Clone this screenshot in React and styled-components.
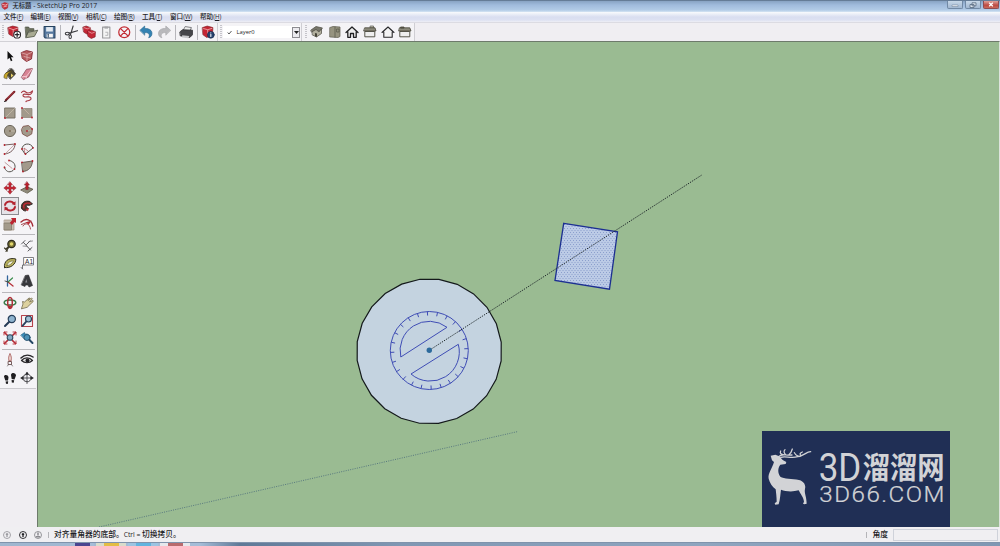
import React from "react";
import styled, { createGlobalStyle } from "styled-components";

const GlobalStyle = createGlobalStyle`
  * { box-sizing: border-box; }
  body { margin: 0; overflow: hidden; background: #f0eef2; }
`;

const ui = `"Open Sans", "Noto Sans CJK SC", sans-serif`;

const Window = styled.div`
  width: 1000px;
  height: 546px;
  display: flex;
  flex-direction: column;
  font-family: ${ui};
  color: #1d1d25;
  overflow: hidden;
`;

const TitleBar = styled.header`
  height: 12px;
  flex: none;
  display: flex;
  align-items: center;
  padding: 0 1px 1px 1px;
  background: linear-gradient(#52677f 0, #8ba6c6 1.5px, #a0bbdc 5px, #b2cbe6 10px, #d5e4f3 12px);
`;

const Title = styled.div`
  display: flex;
  align-items: center;
  margin-left: 3.5px;
  font-size: 6.8px;
  line-height: 11px;
  white-space: pre;
  flex: 1;
`;

const TitleCjk = styled.span`
  font-size: 6.3px;
  font-weight: 500;
`;

const WindowButtons = styled.div`
  display: flex;
  align-self: flex-start;
  gap: 2px;
  padding-top: 1px;
`;

const WindowButton = styled.div`
  width: 16px;
  height: 8px;
  display: grid;
  place-items: center;
  border: 1px solid ${(p) => (p.$close ? "#8f4c50" : "#7189a5")};
  border-top: 0;
  border-radius: 0 0 2px 2px;
  background: ${(p) => (p.$close ? "linear-gradient(#dfa39c, #bd4a42 60%, #c9695b)" : "linear-gradient(#c8d8e9, #a2b8d1)")};
`;

const MenuBar = styled.nav`
  height: 10px;
  flex: none;
  display: flex;
  padding-left: 3.5px;
  background: linear-gradient(#f8fafd 0, #eceff8 2px, #d9def0 5px, #dde1f2 8px, #eeeef5 10px);
`;

const MenuItem = styled.div`
  width: ${(p) => p.$w}px;
  font-size: 6.6px;
  font-weight: 500;
  line-height: 9px;
  white-space: nowrap;
`;

const Mnemonic = styled.span`
  font-size: 6.2px;
  letter-spacing: -0.1px;
  u { text-underline-offset: 0.5px; text-decoration-thickness: 0.6px; }
`;

const ToolStrip = styled.div`
  height: 19px;
  flex: none;
  display: flex;
  align-items: center;
  background: #f0eef2;
  border-top: 1px solid #dcdbe2;
`;

const StripGroup = styled.div`
  display: flex;
  align-items: center;
  height: 18px;
  padding-left: ${(p) => p.$pad ?? 1}px;
  padding-right: ${(p) => p.$end ?? 0}px;
  border-right: 1px solid #cfced3;
  background: #f4f3f6;
`;

const StripButton = styled.div`
  width: 17.7px;
  height: 18px;
  display: grid;
  place-items: center;
`;

const Divider = styled.div`
  width: 1px;
  height: 15px;
  margin: 0 1.7px;
  background: #b7b6bb;
`;

const Grip = styled.div`
  width: 2px;
  height: 14px;
  margin: 0 1px;
  background: repeating-linear-gradient(#c5c4ca 0 1px, #f4f3f6 1px 2px);
`;

const LayerSelect = styled.div`
  width: 77px;
  height: 12px;
  display: flex;
  align-items: center;
  padding-left: 4px;
  background: #fff;
  font-size: 5.8px;
`;

const LayerName = styled.span`
  flex: 1;
  padding-left: 4.5px;
`;

const SelectArrow = styled.div`
  width: 8px;
  height: 11px;
  border: 1px solid #8d8c91;
  background: #ecebef;
  display: grid;
  place-items: center;
`;

const Workspace = styled.main`
  flex: 1;
  min-height: 0;
  display: flex;
`;

const ToolPanel = styled.aside`
  width: 37px;
  flex: none;
  background: #f0eef2;
`;

const PanelInner = styled.div`
  width: 36px;
  padding: 5px 0 1px 0.5px;
  background: #f5f4f7;
  border-top: 1px solid #d2d1d6;
  border-bottom: 1px solid #cbcace;
`;

const ToolGroup = styled.div`
  display: grid;
  grid-template-columns: 18.3px 17.2px;
  grid-auto-rows: 17.7px;
  & + & {
    margin-top: 4.3px;
    position: relative;
  }
  & + &::before {
    content: "";
    position: absolute;
    top: -2.4px;
    left: 1px;
    width: 33px;
    height: 1px;
    background: #b9b8bc;
  }
`;

const ToolButton = styled.div`
  display: grid;
  place-items: center;
  border: 1px solid ${(p) => (p.$active ? "#8c8b90" : "transparent")};
  background: ${(p) => (p.$active ? "#e5e3e8" : "transparent")};
`;

const Canvas = styled.section`
  flex: 1;
  position: relative;
  background: #9abb92;
  border-left: 1px solid #6d7a6b;
  border-top: 1px solid #6d7a6b;
  border-right: 1px solid #dde3dd;
  overflow: hidden;
`;

const Scene = styled.svg`
  display: block;
`;

const Watermark = styled.div`
  position: absolute;
  right: 49px;
  bottom: 0;
  width: 188px;
  height: 96px;
  background: #202f55;
`;

const StatusBar = styled.footer`
  height: 15px;
  flex: none;
  display: flex;
  align-items: center;
  padding: 0 2px 0 2px;
  background: #f0eff2;
`;

const StatusIcons = styled.div`
  display: flex;
  gap: 5.5px;
`;

const StatusTick = styled.div`
  width: 1px;
  height: 6px;
  background: #b4b4b8;
  margin: 0 5px;
`;

const StatusText = styled.div`
  flex: 1;
  font-size: 7.75px;
  font-weight: 500;
  line-height: 15px;
  white-space: nowrap;
`;

const StatusLatin = styled.span`
  font-size: 6.8px;
  letter-spacing: -0.05px;
`;

const MeasureLabel = styled.div`
  font-size: 7.8px;
  font-weight: 500;
  line-height: 15px;
`;

const MeasureBox = styled.div`
  width: 105px;
  height: 12px;
  margin-left: 5px;
  border: 1px solid #cfd2da;
`;

const TaskBar = styled.div`
  height: 4px;
  flex: none;
  display: flex;
  padding-left: 70px;
  gap: 2px;
  border-top: 1px solid #7f93ac;
  background: linear-gradient(90deg, #9fb6cf, #a5bdd8 20%, #5f7997 24%, #8097b3 40%, #8fa5bf 70%, #7f97b3);
`;

const Task = styled.div`
  width: ${(p) => p.$w}px;
  display: flex;
  justify-content: center;
  background: ${(p) => p.$bg};
  &::after {
    content: "";
    width: 15px;
    height: 3px;
    background: ${(p) => p.$mark};
  }
`;

const Icon = ({ children, size = 14 }) => (
  <svg width={size} height={size} viewBox="0 0 14 14" fill="none" strokeLinecap="round" strokeLinejoin="round">
    {children}
  </svg>
);

const RED = "#b5202c";
const DARK = "#29262a";
const TAN = "#a29a8b";
const Dots = ({ at }) => at.map(([x, y]) => <circle key={`${x}-${y}`} cx={x} cy={y} r="0.9" fill={RED} />);

const icons = {
  create: (
    <>
      <path d="M1 2.500 5.500 1l5 1.200v6.800L5.500 11 2 9Z" fill="#c42533" stroke="#7d1b22" strokeWidth=".6" />
      <path d="m2 3 4 1.500L10.300 3M6 4.500V10" stroke="#ecb1b3" strokeWidth=".8" />
      <circle cx="9.800" cy="9.300" r="3.300" fill="#fff" stroke={DARK} strokeWidth="1" />
      <path d="M9.800 7.500v3.600M8 9.300h3.600" stroke={DARK} strokeWidth="1.200" />
    </>
  ),
  open: (
    <>
      <path d="M1.500 2h3l1 1.500h4v2.500h-5L2 11.500Z" fill="#6f7460" stroke="#454a3c" strokeWidth=".7" />
      <path d="M4.500 7 13.300 5 10 11 2 12.300Z" fill="#a9ab93" stroke="#55594a" strokeWidth=".8" />
    </>
  ),
  save: (
    <>
      <path d="M2 1.500h10.500v11H3l-1-1.200Z" fill="#55779e" stroke="#27435f" strokeWidth="1" />
      <path d="M4 2h6.500v4.300H4Z" fill="#e3eaf1" />
      <path d="M4.500 8.500h6v3.500h-6Z" fill="#f5f5f5" />
      <path d="M6 9v2.500" stroke="#27435f" />
    </>
  ),
  cut: (
    <>
      <path d="M8.800 1 6.300 9.300M13 5.500 5 7.800" stroke="#3b3b3e" strokeWidth="1.100" />
      <ellipse cx="3.200" cy="8.300" rx="2" ry="1.300" stroke="#3b3b3e" />
      <ellipse cx="6" cy="11.300" rx="1.200" ry="1.700" stroke="#3b3b3e" />
    </>
  ),
  copy: (
    <>
      <path d="m1 2 3-1 4 1.500v5L5 9 1.800 7Z" fill="#c42836" stroke="#7d1b22" strokeWidth=".6" />
      <path d="m5.500 6 3.500-1 4 1.500-.3 5L9 13l-3.200-2Z" fill="#c42836" stroke="#7d1b22" strokeWidth=".6" />
      <path d="m2 2.500 3 1.200 2.500-1M6.500 6.500 9.500 8 12 7" stroke="#e9a1a5" strokeWidth=".8" />
    </>
  ),
  paste: (
    <>
      <path d="M3.500 2h7v10.500h-7Z" fill="#f4f4f4" stroke="#9b9b9e" strokeWidth="1.100" />
      <path d="M5.300 1.500h3.400v2H5.300Z" fill="#a5a5a8" />
      <path d="M6.500 7h2v3h-2" stroke="#aaaaad" strokeWidth=".8" />
    </>
  ),
  erase: (
    <>
      <circle cx="7" cy="7" r="5.300" stroke="#c32d34" strokeWidth="1.200" />
      <path d="m3.500 3.500 7 7m0-7-7 7" stroke="#c32d34" strokeWidth="1.300" />
    </>
  ),
  undo: <path d="M1 5 5.500 1v2.500C10 3 12.800 5.500 12.500 8.500c0 2-1.500 3.500-3.200 3.800C11 9.500 9.500 7 5.500 7.300V9.500Z" fill="#3483b3" stroke="#24658d" strokeWidth=".6" />,
  redo: <path d="M13 5 8.500 1v2.500C4 3 1.200 5.500 1.500 8.500c0 2 1.500 3.500 3.200 3.800C3 9.500 4.500 7 8.500 7.300V9.500Z" fill="#b9b9bc" stroke="#a3a3a6" strokeWidth=".6" />,
  print: (
    <>
      <path d="M4 5 6 1.500l6 1L10.500 6Z" fill="#eee" stroke="#58585c" strokeWidth=".7" />
      <path d="M1 6.500 3.500 4.500 13 5v4.500L10.500 12 1.500 10.500Z" fill="#46464a" stroke="#252528" strokeWidth=".7" />
      <path d="M3 10 10 10.500 9 12.800 3 12Z" fill="#c9c9cc" />
    </>
  ),
  info: (
    <>
      <path d="M1.500 2.500 6 1l5.500 1.500L11 10l-5.500 2L2 9.500Z" fill="#c42533" stroke="#7d1b22" strokeWidth=".6" />
      <path d="m2.500 3.500 4 1 4-1.200M6.500 5v3" stroke="#ecb1b3" strokeWidth=".8" />
      <circle cx="9.500" cy="9.500" r="3.300" fill="#26436f" stroke="#172c4c" strokeWidth=".6" />
      <path d="M9.500 9v2.200M9.500 7.500v.1" stroke="#fff" />
    </>
  ),
  iso: (
    <>
      <path d="m1 5 5-3.500 6.500 1.500L9 6.500l-3-2L1.800 7Z" fill="#77766a" stroke="#4a493f" strokeWidth=".7" />
      <path d="m2.500 6.500 3.500-2L9 7l2.500-3v4.500L6.500 12 2.500 10Z" fill="#b1af9e" stroke="#4a493f" strokeWidth=".7" />
      <path d="M5 8v3.200L7 12V8.500Z" fill="#454338" />
    </>
  ),
  top: (
    <>
      <path d="M2 2.500 5 1.500l7 .5v9.500l-2 1-8-.5Z" fill="#96937f" stroke="#5c5a4c" strokeWidth=".7" />
      <path d="M7 2v10.300M9 4h2v3H9Z" stroke="#5c5a4c" strokeWidth=".8" />
    </>
  ),
  front: <path d="M1 7.500 7 2l6 5.500M2.800 7v5.300h2.700V8.500h3v3.800h2.700V7" stroke="#202022" strokeWidth="1.300" fill="#eee" />,
  right: (
    <>
      <path d="M7.500 1h3v2h-3Z" fill="#c7c5b4" stroke="#55544a" strokeWidth=".7" />
      <path d="M2 2.800h10L13 6H1Z" fill="#8b897a" stroke="#464539" strokeWidth=".8" />
      <path d="M2.200 6.500h9.600v5.300H2.200Z" fill="#eee" stroke="#464539" strokeWidth=".9" />
    </>
  ),
  back: <path d="M1 7.500 7 2l6 5.500M2.800 7v5.300h8.400V7" stroke="#28282a" strokeWidth="1.100" fill="#f4f4f4" />,
  left: (
    <>
      <path d="M3 2h3v1H3ZM1.800 2.800h10L13 6H1Z" fill="#8b897a" stroke="#464539" strokeWidth=".8" />
      <path d="M2.200 6.500h9.600v5.300H2.200Z" fill="#eee" stroke="#464539" strokeWidth=".9" />
    </>
  ),
  select: <path d="M4.500 2v8.500l2-1.800 1.400 3.500 1.500-.6L8 8.300h2.600Z" fill="#111" />,
  component: (
    <>
      <path d="m1.500 3.500 5-2 6 1.500-1 7-5 2.500-4-3Z" fill="#b65a5d" stroke="#7d2028" strokeWidth=".8" />
      <path d="m2 4 5 1.500L12 3.300M7 5.500v6.300M4 7.500 10 9" stroke="#ddadad" strokeWidth=".8" />
    </>
  ),
  appMark: (
    <>
      <path d="m1.500 3 5-2 6 1.500-1 8-5 2.500-4-3Z" fill="#c8323c" stroke="#a3202b" strokeWidth=".8" />
      <path d="m2.500 4 5 1.500 4-2M5 8.500l5-1.500" stroke="#f3d3d5" strokeWidth="1.300" />
    </>
  ),
  paint: (
    <>
      <path d="M3 6 8.500 2l4 5-5 5Z" fill="#4c4631" stroke="#24211a" strokeWidth=".8" />
      <path d="M1 10.500C.800 7 3 4.500 8.500 4.800 5 6 4.500 7 4 11.500Z" fill="#c9a92c" stroke="#4b4019" strokeWidth=".6" />
      <path d="m8 6.500 2.500 2L8 10.500" fill="#e7d16b" />
      <path d="M5 4c0-3 5-3.500 6 0" stroke="#54534d" />
    </>
  ),
  eraser: (
    <>
      <path d="M1.500 10 6.500 2.300l6-.8-3.800 8.500-5 2.500Z" fill="#d88495" stroke="#8c4a57" strokeWidth=".8" />
      <path d="m2 9.800 4.500-.5L12 2M6.500 9.300 6 11.500" stroke="#f4cfd5" strokeWidth=".9" />
    </>
  ),
  line: (
    <>
      <path d="M2.800 11.300 11.300 2.800" stroke="#7a1e24" strokeWidth="2.200" />
      <path d="m4.500 9 6-6" stroke="#c05058" strokeWidth=".8" />
      <path d="m1.500 12.500 2-.7" stroke="#222" />
    </>
  ),
  freehand: <path d="M1.500 3.500C3 1.500 4.500 2 6 3.200S9.500 4.500 12.500 2c-.5 3.500-3 4-5 3.500S3 4.500 3 6.500s3 1.500 5.500 1.300 3.500 2.200 1.500 3.200-3 .5-4 1.500" stroke="#a83c45" strokeWidth="1.200" />,
  rect: (
    <>
      <path d="M2 2h10v10H2Z" fill={TAN} stroke="#716a5c" strokeWidth=".9" />
      <path d="m2.500 11.500 9-9" stroke="#c6bda9" strokeWidth=".8" />
      <Dots at={[[2, 12]]} />
    </>
  ),
  rotRect: (
    <>
      <path d="M2 2.500h10v9H2Z" fill={TAN} stroke="#8a8272" strokeWidth=".7" />
      <path d="m4 3 5 5" stroke="#c9b9a8" strokeWidth=".8" />
      <Dots at={[[2, 2], [2, 12], [12, 11.500]]} />
    </>
  ),
  circle: (
    <>
      <circle cx="7" cy="7" r="5.600" fill={TAN} stroke="#625c50" strokeWidth=".9" />
      <path d="M7 7h5" stroke="#c9c0ae" strokeWidth=".8" />
      <circle cx="7" cy="7" r=".9" fill="#776450" />
    </>
  ),
  polygon: (
    <>
      <path d="M3.500 2.300 8.500 1.500l4 3.500-.8 5-4.500 2.500-4.700-2.500L1.500 6Z" fill={TAN} stroke="#81584f" strokeWidth=".9" />
      <path d="m7 7 5-1.500" stroke="#cbbdae" strokeWidth=".7" />
      <Dots at={[[7, 7], [12, 5]]} />
    </>
  ),
  arc: (
    <>
      <path d="M1.500 3 12 2c0 5-4 9.500-10.500 10" stroke="#6b4d4c" strokeWidth=".9" />
      <path d="m2.500 11.500 9-9" stroke="#b48587" strokeWidth=".7" />
      <Dots at={[[1.500, 3], [12, 2], [1.500, 12]]} />
    </>
  ),
  arc2: (
    <>
      <path d="M2 7c0-6 9-7 11-1L5.500 12Z" stroke="#55534e" strokeWidth="1" />
      <path d="M5 12 4 6l4 3" stroke="#b15b60" strokeWidth=".7" />
      <Dots at={[[2, 7], [13, 5.800], [5.500, 12]]} />
    </>
  ),
  arc3: (
    <>
      <path d="M6.500 1.500C12 2.500 14 8.500 10 11.500S2 12 1.500 8" stroke="#55534e" strokeWidth="1" />
      <path d="m2 3.500 7 5.800" stroke="#b48587" strokeWidth=".8" />
      <Dots at={[[1.500, 8.500], [6, 1.500], [11.500, 10]]} />
    </>
  ),
  pie: (
    <>
      <path d="M2 3.500 12.500 2C12 8 9 12 3 12.500Z" fill={TAN} stroke="#5e574d" strokeWidth=".9" />
      <Dots at={[[2, 3.300], [12.500, 2], [3, 12.500]]} />
    </>
  ),
  move: <path d="m7 .8 2.500 3H8v2.200h2.200V4.500l3 2.500-3 2.500V8H8v2.200h1.500L7 13.200l-2.500-3H6V8H3.800v1.500L.8 7l3-2.500V6H6V3.800H4.500Z" fill="#c52635" stroke="#852029" strokeWidth=".4" />,
  pushpull: (
    <>
      <path d="m1 8.800 6-3 6 2.500L7.500 12Z" fill="#8e8979" stroke="#57513f" strokeWidth=".8" />
      <path d="M7 .7 9.500 4H8.200v4.500H5.800V4H4.500Z" fill="#b9202e" stroke="#76151e" strokeWidth=".4" />
    </>
  ),
  rotate: (
    <>
      <path d="M2 6c.7-3.700 6-4.600 8.500-2" stroke="#b32430" strokeWidth="1.900" />
      <path d="m12.600 2.200-.2 4.200L8.600 5Z" fill="#b32430" />
      <path d="M12 8c-.7 3.700-6 4.600-8.500 2" stroke="#b32430" strokeWidth="1.900" />
      <path d="M1.400 11.800 1.600 7.600 5.400 9Z" fill="#b32430" />
    </>
  ),
  follow: (
    <>
      <path d="M1.500 9C.5 4 5 1 10 2.500l2.500 2.500L9 6.500C6 5.500 5.500 8 8.500 9.500L5.500 12C4 12 2 11 1.500 9Z" fill="#54352f" stroke="#2b211f" strokeWidth=".8" />
      <path d="M4 9C2.500 5 6 3.500 10 4.300" stroke="#c32a36" strokeWidth="1.300" />
      <path d="m5.500 10 3.500-.5-1.200 2.800Z" fill="#c32a36" />
    </>
  ),
  scale: (
    <>
      <path d="M1.500 3h9.500v10H1.500Z" fill="#c9bfb2" stroke="#a0907f" strokeWidth=".7" />
      <path d="M1.500 6H8.500v7H1.500Z" fill="#a49b8b" stroke="#7c7262" strokeWidth=".7" />
      <path d="M8 1h5v5l-1.500-1L9 8 6.800 5.700 9.300 3Z" fill="#bc2430" />
    </>
  ),
  offset: (
    <>
      <path d="M1 5c5-4.500 10.500-2.500 11.800 4" stroke="#a62b36" strokeWidth="1.400" />
      <path d="M3 9c2-4 7-2.500 7.500 3M1.500 7.500 8 5l3-1" stroke="#a84e55" strokeWidth="1" />
      <path d="m6 5 4.500 0-2 3Z" fill="#bf2633" />
    </>
  ),
  tape: (
    <>
      <circle cx="8.500" cy="5" r="3.700" fill="#777035" stroke="#2d2b1e" strokeWidth="1.200" />
      <circle cx="8.500" cy="5" r="1.700" fill="#e2d76c" />
      <path d="M5.500 7.500 3 10M1.500 9l3 3M6 8l-3 4.500" stroke="#3e3a28" strokeWidth="1.100" />
    </>
  ),
  dimension: (
    <>
      <path d="M3.500 3.500 10.500 11M1.500 5l3.500-3.500M8 12l4-3.500M6.500 5.500 10 2" stroke="#4a4a4c" strokeWidth=".9" />
      <path d="m3 7 4 .3M9 2.500l3.500-.5" stroke="#737377" strokeWidth=".8" />
    </>
  ),
  protractor: (
    <>
      <path d="M1.500 11.500C.5 5.500 5.500 1 12.800 3c.2 5-4.800 9.500-11.300 8.500Z" fill="#b8b05a" stroke="#353323" strokeWidth="1" />
      <path d="M4 9.700C4 7 7 4.800 10.500 4.800 9 7.800 7 9.300 4 9.700Z" fill="#f4f3dc" stroke="#706b3b" strokeWidth=".7" />
    </>
  ),
  text: (
    <>
      <path d="M4 1.500h9.500v7.500H4Z" fill="#fff" stroke="#626266" strokeWidth=".8" />
      <text x="5.100" y="7.600" fontSize="6.500" fontFamily="Liberation Sans" fill="#29292e">A1</text>
      <path d="M4 9H2.500v3.500M1.200 11.500l1.300 1.500" stroke="#565659" strokeWidth=".8" />
    </>
  ),
  axes: (
    <>
      <path d="M4.500 2v10" stroke="#32649b" strokeWidth="1.300" />
      <path d="m5 8 5 4" stroke="#b52c35" strokeWidth="1.300" />
      <path d="m5 8 4.500-4" stroke="#3b8d4d" strokeWidth="1.200" />
      <path d="m2 7 3 1" stroke="#444" strokeWidth=".9" />
    </>
  ),
  text3d: (
    <>
      <path d="M5.500 1.500 8.500 1l4 10.500-3.500 1.500-1-2H5.500L5 12.500 1.500 11Z" fill="#39393d" stroke="#252529" strokeWidth=".6" />
      <path d="m6.300 5 1 3.500H5.200Z" fill="#8d8d92" />
    </>
  ),
  orbit: (
    <>
      <ellipse cx="7" cy="6.500" rx="5.800" ry="2.600" stroke="#397b48" strokeWidth="1.500" />
      <ellipse cx="7" cy="7" rx="2.300" ry="5.500" stroke="#ae3038" strokeWidth="1.500" />
      <path d="m5 9.500 4.500.5-3 3Z" fill="#b52832" />
    </>
  ),
  pan: <path d="M1.500 12.500 3 8l-.5-2.500 2 .5L9 2l1 .3-2 2.200L11.500 2l.8.8L9.500 6 13 4.500l.2 1L10 8.500 7.500 11Z" fill="#ddd19e" stroke="#746b4c" strokeWidth=".8" />,
  zoom: (
    <>
      <circle cx="8.800" cy="5" r="3.600" fill="#8fb4cf" stroke="#253e59" strokeWidth="1.200" />
      <path d="M6 8 2 12" stroke="#263b56" strokeWidth="2" />
    </>
  ),
  zoomWindow: (
    <>
      <path d="M1.500 1.500h11v11h-11Z" stroke="#b6424c" strokeWidth="1.100" />
      <circle cx="8.500" cy="5" r="3" fill="#9ebed3" stroke="#263e59" strokeWidth="1.100" />
      <path d="m6 7.800-3.500 4" stroke="#27415e" strokeWidth="1.800" />
    </>
  ),
  zoomAll: (
    <>
      <path d="m1.500 1.500 3 3m8-3-3 3m-8 8 3-3m8 3-3-3" stroke="#b72c37" strokeWidth="1.700" />
      <path d="M1 4V1h3M10 1h3v3M1 10v3h3M10 13h3v-3" stroke="#b72c37" strokeWidth=".9" />
      <circle cx="7" cy="6.500" r="2.800" fill="#85abc4" stroke="#324c61" strokeWidth="1.100" />
    </>
  ),
  previous: (
    <>
      <path d="M1 4 4.500 1.500V3C9 2.500 11 5 9.800 9 8.500 7 7 6.200 4.500 6.500V8Z" fill="#388bb9" stroke="#276486" strokeWidth=".7" />
      <circle cx="7" cy="6.500" r="3" fill="#4c91b7" stroke="#28516e" strokeWidth=".9" />
      <path d="m9.500 9 3 3" stroke="#244663" strokeWidth="2" />
    </>
  ),
  camera: (
    <>
      <path d="M7 1C5.500 3 5.500 5 6 8h2c.5-3 .5-5-1-7Z" fill="#f6e4de" stroke="#a45856" strokeWidth=".9" />
      <path d="M5.500 8.500h3v3h-3Z" stroke="#5c3836" strokeWidth=".8" />
      <path d="m4.500 13 1-1.500m4 1.500-1-1.500" stroke="#5c5555" strokeWidth=".7" />
    </>
  ),
  look: (
    <>
      <path d="M1 5c4-4 9-3 12-1" stroke="#29282b" strokeWidth="1.500" />
      <path d="M1.500 7.500c3-3.500 8-3.500 11 0-3 3-8 3-11 0Z" fill="#ddd" stroke="#29282b" strokeWidth="1.200" />
      <circle cx="7.500" cy="7.500" r="2" fill="#202024" />
    </>
  ),
  walk: (
    <path d="M1 5.500C1 3.500 5.200 3.200 5.500 6.500L5 9.500 2.300 9.500ZM2.600 10.400l2.600-.1-.4 2.600-1.800-.1ZM8 4c.3-3 5-2.500 5 .5l-1.500 4-2.800-.5Zm.6 4.900 2.600.4-.5 2.400-1.900-.3Z" fill="#1f1e20" />
  ),
  section: (
    <>
      <circle cx="7" cy="7" r="3.800" stroke="#444347" strokeWidth="1" />
      <path d="M1 7h12M7 1.500v11" stroke="#444347" strokeWidth=".9" />
      <path d="m5 3.500 2-2.800 2 2.800ZM11 5l2.500 2L11 9ZM3 5 .5 7 3 9Z" fill="#29292c" />
    </>
  ),
};

const mainTools = [["create", "open", "save"], ["cut", "copy", "paste", "erase"], ["undo", "redo"], ["print"], ["info"]];
const viewTools = ["iso", "top", "front", "right", "back", "left"];
const sideTools = [
  ["select", "component", "paint", "eraser"],
  ["line", "freehand", "rect", "rotRect", "circle", "polygon", "arc", "arc2", "arc3", "pie"],
  ["move", "pushpull", "rotate", "follow", "scale", "offset"],
  ["tape", "dimension", "protractor", "text", "axes", "text3d"],
  ["orbit", "pan", "zoom", "zoomWindow", "zoomAll", "previous"],
  ["camera", "look", "walk", "section"],
];
const menus = [
  ["文件", "F", 27], ["编辑", "E", 27.500], ["视图", "V", 28], ["相机", "C", 28],
  ["绘图", "R", 28], ["工具", "T", 28], ["窗口", "W", 30], ["帮助", "H", 28],
];

const polar = (cx, cy, r, deg) => {
  const a = (deg * Math.PI) / 180;
  return [cx + r * Math.cos(a), cy - r * Math.sin(a)];
};

const disc = Array.from({ length: 24 }, (_, i) => polar(429.200, 351.300, 72.600, i * 15 + 7.300).join(",")).join(" ");
const ticks = Array.from({ length: 24 }, (_, i) => {
  const a = 32.800 + i * 15;
  const [x1, y1] = polar(429.300, 350.500, 39, a);
  const [x2, y2] = polar(429.300, 350.500, 35, a);
  return `M${x1} ${y1}L${x2} ${y2}`;
}).join("");

function Model() {
  return (
    <Scene width="961" height="485" viewBox="38 42 961 485">
      <defs>
        <pattern id="selected" width="3" height="4" patternUnits="userSpaceOnUse">
          <rect width="3" height="4" fill="#bccbe6" />
          <rect x="0" y="0" width="1" height="1" fill="#8c9fcd" />
          <rect x="1.500" y="2" width="1" height="1" fill="#8c9fcd" />
        </pattern>
      </defs>
      <path d="M99 527 518 431.500" stroke="#4f6f7c" strokeWidth=".9" strokeDasharray="1 1.300" />
      <polygon points={disc} fill="#c4d3e0" stroke="#14191b" strokeWidth="1.200" />
      <g fill="none" stroke="#3f4db5" strokeWidth="1">
        <circle cx="429.300" cy="350.500" r="39" />
        <path d={ticks} />
        <path d="M400.800 357 447 327.300A29.200 29.200 0 0 0 400.800 357Z" />
        <path d="M458.300 344.300 411 374A29.200 29.200 0 0 0 458.300 344.300Z" />
      </g>
      <polygon points="563.700,223.300 617.500,231.800 609.500,289.200 555,280.500" fill="url(#selected)" stroke="#1c2f91" strokeWidth="1.300" />
      <path d="M429.300 350.300 701.500 175.200" stroke="#20292b" strokeWidth="1" strokeDasharray="1.300 1.200" />
      <circle cx="429.300" cy="350.300" r="2.700" fill="#2c6a9c" />
    </Scene>
  );
}

function Logo() {
  return (
    <svg width="188" height="96" viewBox="36 33 564 288" fill="#d2d3d6" overflow="visible">
      <path d="M62 107 76 104 88 109 98 120 109 126 107 132 91 134C83 144 83 159 91 170 102 177 126 175 147 180 162 184 168 196 165 207 162 219 170 230 170 251L163 253 159 251 162 245C161 232 151 222 146 211 129 216 107 215 93 209 91 221 91 237 86 253L76 254 74 250 80 245C80 230 78 217 77 208 67 200 59 189 56 176 53 160 66 147 72 126L66 121Z" />
      <g fill="none" stroke="#d2d3d6" strokeWidth="3.800" strokeLinecap="round">
        <path d="M86 110C94 99 105 107 126 105M99 104Q88 102 92 93M108 105Q98 96 105 89M116 105Q124 99 127 87M92 112C106 107 123 116 143 110 160 109 169 95 182 95M145 109Q135 104 133 98M154 107Q145 101 157 96" />
      </g>
      <text x="206" y="182" fontFamily="Roboto" fontSize="115" textLength="128" lengthAdjust="spacingAndGlyphs">3D</text>
      <text x="338" y="173" fontFamily="Noto Sans CJK SC" fontWeight="700" fontSize="88" textLength="246" lengthAdjust="spacingAndGlyphs">溜溜网</text>
      <text x="208" y="245" fontFamily="Roboto" fontWeight="300" fontSize="64" letterSpacing="4" stroke="#d2d3d6" strokeWidth=".7" textLength="380" lengthAdjust="spacingAndGlyphs">3D66.COM</text>
    </svg>
  );
}

const StatusGlyph = ({ color, person }) => (
  <svg width="10" height="10" viewBox="0 0 10 10" fill="none" stroke={color}>
    <circle cx="5" cy="5" r="3.500" strokeWidth=".9" />
    {person ? <path d="M5 2.500v3M2.800 6.800h4.400" strokeWidth="1.500" /> : <path d="M5 3v4M3.800 4.300h2.400" strokeWidth="1.300" />}
  </svg>
);

export default function App() {
  return (
    <>
      <GlobalStyle />
      <Window>
        <TitleBar>
          <Icon size={8}>{icons.appMark}</Icon>
          <Title><TitleCjk>无标题</TitleCjk> - SketchUp Pro 2017</Title>
          <WindowButtons>
            <WindowButton>
              <svg width="8" height="5"><path d="M1 3h6v1.500H1Z" fill="#f6f8fa" stroke="#667b93" strokeWidth=".5" /></svg>
            </WindowButton>
            <WindowButton>
              <svg width="8" height="6"><path d="M3 .8h4v3H3ZM1 2.500h4v3H1Z" fill="#dce5ee" stroke="#586b82" strokeWidth=".8" /></svg>
            </WindowButton>
            <WindowButton $close>
              <svg width="6" height="5"><path d="m1.200.8 3.600 3.400m0-3.400L1.200 4.200" stroke="#fff" strokeWidth="1.300" /></svg>
            </WindowButton>
          </WindowButtons>
        </TitleBar>
        <MenuBar>
          {menus.map(([label, key, w]) => (
            <MenuItem key={key} $w={w}>{label}<Mnemonic>(<u>{key}</u>)</Mnemonic></MenuItem>
          ))}
        </MenuBar>
        <ToolStrip>
          <StripGroup>
            <Grip />
            {mainTools.map((group, i) => (
              <React.Fragment key={i}>
                {i > 0 && <Divider />}
                {group.map((name) => (
                  <StripButton key={name}><Icon size={14.500}>{icons[name]}</Icon></StripButton>
                ))}
              </React.Fragment>
            ))}
          </StripGroup>
          <StripGroup $pad={1} $end={1}>
            <Grip />
            <LayerSelect>
              <svg width="5" height="5"><path d="m.7 2.500 1.300 1.500 2.500-3" fill="none" stroke="#333" strokeWidth=".8" /></svg>
              <LayerName>Layer0</LayerName>
              <SelectArrow><svg width="5" height="3"><path d="M0 0h5L2.500 3Z" fill="#222" /></svg></SelectArrow>
            </LayerSelect>
          </StripGroup>
          <StripGroup $pad={2}>
            <Grip />
            {viewTools.map((name) => (
              <StripButton key={name}><Icon size={14}>{icons[name]}</Icon></StripButton>
            ))}
          </StripGroup>
        </ToolStrip>
        <Workspace>
          <ToolPanel>
            <PanelInner>
              {sideTools.map((group, i) => (
                <ToolGroup key={i}>
                  {group.map((name) => (
                    <ToolButton key={name} $active={name === "rotate"}><Icon size={14}>{icons[name]}</Icon></ToolButton>
                  ))}
                </ToolGroup>
              ))}
            </PanelInner>
          </ToolPanel>
          <Canvas>
            <Model />
            <Watermark><Logo /></Watermark>
          </Canvas>
        </Workspace>
        <StatusBar>
          <StatusIcons>
            <StatusGlyph color="#9b9ba0" />
            <StatusGlyph color="#202024" />
            <StatusGlyph color="#8b8b90" person />
          </StatusIcons>
          <StatusTick />
          <StatusText>对齐量角器的底部。<StatusLatin>Ctrl = </StatusLatin>切换拷贝。</StatusText>
          <StatusTick />
          <MeasureLabel>角度</MeasureLabel>
          <MeasureBox />
        </StatusBar>
        <TaskBar>
          <Task $w={24} $bg="#a5bdd8" $mark="#4a4590" />
          <Task $w={30} $bg="#d9dccb" $mark="#e3bd45" />
          <Task $w={30} $bg="#9cc4e2" $mark="#62b4df" />
          <Task $w={30} $bg="#e6e8ec" $mark="#b96b6e" />
        </TaskBar>
      </Window>
    </>
  );
}
